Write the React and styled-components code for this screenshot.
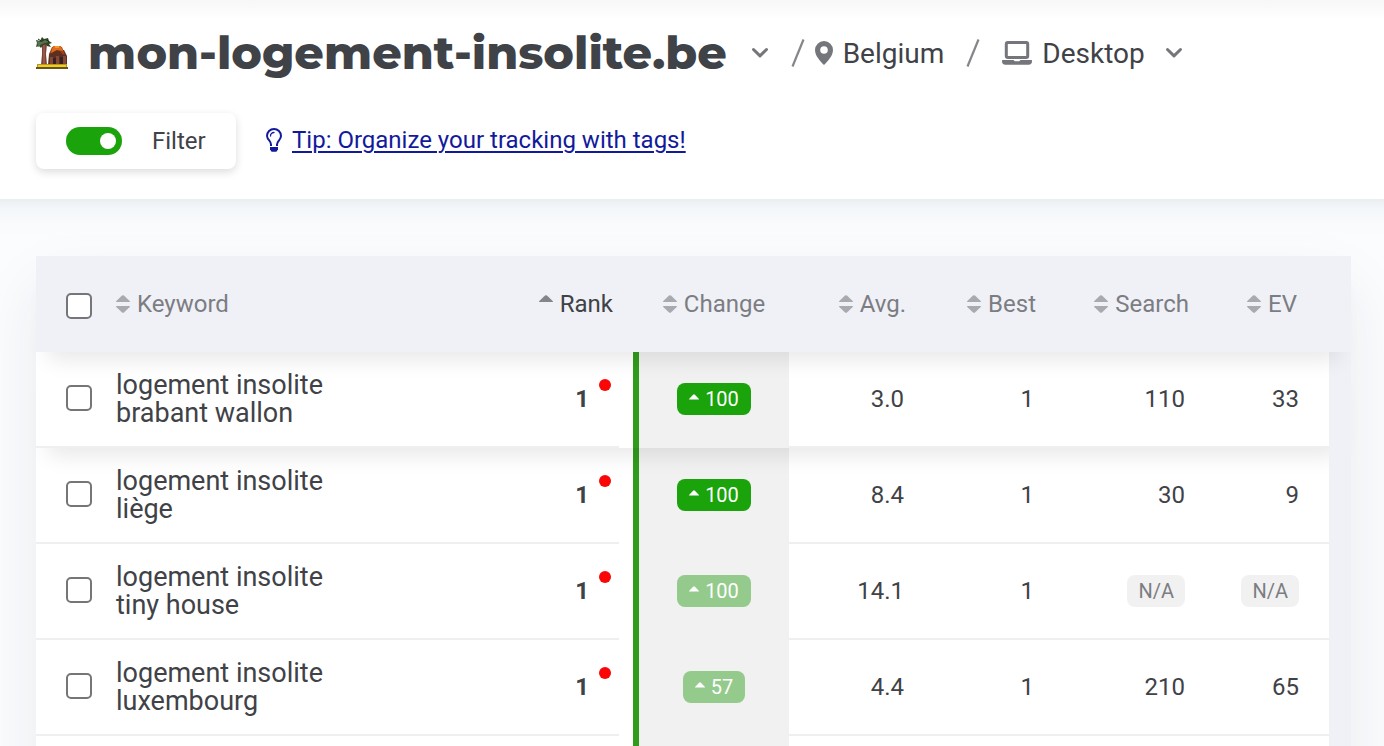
import React, { useState } from "react";
import styled, { createGlobalStyle } from "styled-components";

const keywords = [
  { name: ["logement insolite", "brabant wallon"], rank: 1, change: 100, avg: "3.0", best: 1, search: 110, ev: 33, raised: true },
  { name: ["logement insolite", "liège"], rank: 1, change: 100, avg: "8.4", best: 1, search: 30, ev: 9 },
  { name: ["logement insolite", "tiny house"], rank: 1, change: 100, avg: "14.1", best: 1, search: null, ev: null, faded: true },
  { name: ["logement insolite", "luxembourg"], rank: 1, change: 57, avg: "4.4", best: 1, search: 210, ev: 65, faded: true },
];

const App = () => {
  const [filter, setFilter] = useState(true);

  return (
    <Page>
      <GlobalStyle />
      <Header>
        <TitleRow>
          <SiteIcon />
          <Title>mon-logement-insolite.be</Title>
          <IconButton aria-label="Switch site">
            <Chevron />
          </IconButton>
          <SlashIcon />
          <Place>
            <PinIcon />
            Belgium
          </Place>
          <SlashIcon />
          <DeviceButton>
            <LaptopIcon />
            Desktop
            <Chevron />
          </DeviceButton>
        </TitleRow>
        <ToolRow>
          <FilterCard>
            <Switch
              type="checkbox"
              role="switch"
              checked={filter}
              onChange={(e) => setFilter(e.target.checked)}
            />
            Filter
          </FilterCard>
          <TipLink href="#tags">
            <BulbIcon />
            <span>Tip: Organize your tracking with tags!</span>
          </TipLink>
        </ToolRow>
      </Header>
      <Content>
        <KeywordTable />
      </Content>
    </Page>
  );
};

const KeywordTable = () => {
  return (
    <Table>
      <colgroup>
        <Col $w={80} />
        <col />
        <Col $w={120} />
        <Col $w={156} />
        <Col $w={145} />
        <Col $w={130} />
        <Col $w={151} />
        <Col $w={114} />
        <Col $w={22} />
      </colgroup>
      <Head>
        <tr>
          <HeadCell $align="left" $left={30} $top={4}>
            <Checkbox type="checkbox" aria-label="Select all keywords" />
          </HeadCell>
          <SortHead label="Keyword" align="left" />
          <SortHead label="Rank" right={20} active />
          <SortHead label="Change" align="center" left={6} />
          <SortHead label="Avg." right={28} />
          <SortHead label="Best" right={28} />
          <SortHead label="Search" right={26} />
          <SortHead label="EV" right={32} />
          <HeadCell />
        </tr>
      </Head>
      <tbody>
        {keywords.map((row) => (
          <KeywordRow key={row.name[1]} row={row} />
        ))}
        <Row>
          <Cell />
          <Cell />
          <RankCell />
          <ChangeCell />
          <Cell />
          <Cell />
          <Cell />
          <Cell />
          <Gutter />
        </Row>
      </tbody>
    </Table>
  );
};

const SortHead = ({ label, align = "right", left = 0, right = 0, active }) => {
  return (
    <HeadCell $align={align} $left={left} $right={right} aria-sort={active ? "ascending" : "none"}>
      <SortButton $active={active}>
        <SortIcon active={active} />
        {label}
      </SortButton>
    </HeadCell>
  );
};

const KeywordRow = ({ row }) => {
  return (
    <Row $raised={row.raised}>
      <CheckCell>
        <Checkbox type="checkbox" aria-label={row.name.join(" ")} />
      </CheckCell>
      <NameCell>
        {row.name[0]}
        <br />
        {row.name[1]}
      </NameCell>
      <RankCell>
        <Rank>
          {row.rank}
          <Dot />
        </Rank>
      </RankCell>
      <ChangeCell>
        <Badge $faded={row.faded}>
          <BadgeArrow />
          {row.change}
        </Badge>
      </ChangeCell>
      <Cell>{row.avg}</Cell>
      <Cell>{row.best}</Cell>
      <Cell>{row.search ?? <Missing>N/A</Missing>}</Cell>
      <Cell>{row.ev ?? <Missing>N/A</Missing>}</Cell>
      <Gutter />
    </Row>
  );
};

// Icons
const SortIcon = ({ active }) => (
  <svg width="14" height="20" viewBox="0 0 14 20" aria-hidden="true">
    <path d="M0 8Q0 7.4.6 6.8L6 1.6Q7 .8 8 1.6L13.4 6.8Q14 7.4 14 8Z" fill={active ? "#84858c" : "#a9aaaf"} />
    {!active && <path d="M0 12Q0 12.6.6 13.2L6 18.4Q7 19.2 8 18.4L13.4 13.2Q14 12.6 14 12Z" fill="#a9aaaf" />}
  </svg>
);

const BadgeArrow = () => (
  <svg width="10" height="10" viewBox="0 0 10 10" aria-hidden="true">
    <path d="M0 5.4Q0 4.9 .5 4.4L4.1.7Q5 0 5.9.7L9.5 4.4Q10 4.9 10 5.4Z" fill="#fff" />
  </svg>
);

const SlashIcon = () => (
  <svg width="14" height="28" viewBox="0 0 14 28" fill="none" stroke="#85868a" strokeWidth="2.2" aria-hidden="true">
    <path d="M1.5 27.500L12.500.5" />
  </svg>
);

const Chevron = () => (
  <svg width="18" height="12" viewBox="0 0 18 12" fill="none" stroke="#75767a" strokeWidth="3" strokeLinecap="round" strokeLinejoin="round" aria-hidden="true">
    <path d="M2.500 2.500L9 8.800l6.500-6.300" />
  </svg>
);

const PinIcon = () => (
  <svg width="18" height="24" viewBox="0 0 18 24" aria-hidden="true">
    <path fillRule="evenodd" fill="#75767b" d="M9 0a9 9 0 0 0-9 9c0 5.600 5 11 9 15 4-4 9-9.400 9-15a9 9 0 0 0-9-9Zm0 5.200a3.800 3.800 0 1 1 0 7.600 3.800 3.800 0 0 1 0-7.600Z" />
  </svg>
);

const LaptopIcon = () => (
  <svg width="30" height="24" viewBox="0 0 30 24" aria-hidden="true">
    <rect x="4.300" y="1.500" width="21.400" height="15" rx="1.500" fill="none" stroke="#75767b" strokeWidth="3" />
    <path fill="#75767b" d="M.6 19h10.800q.4 0 .6.500.3.700 1.100.7h3.800q.8 0 1.100-.7.200-.5.600-.5h10.800q.6 0 .6.600v.4q0 3.800-3.400 3.800H3.400Q0 23.800 0 20v-.4q0-.6.600-.6Z" />
  </svg>
);

const BulbIcon = () => (
  <svg width="16" height="24" viewBox="0 0 16 24" fill="none" stroke="#121a9c" strokeWidth="2" aria-hidden="true">
    <path d="M5 18v-1.500c0-1.500-.7-2.700-1.700-4A7.200 7.200 0 0 1 1 8a7 7 0 0 1 14 0c0 1.800-1 3.200-2 4.500s-2 2.500-2 4V18" />
    <path d="M4.500 8A3.500 3.500 0 0 1 8 4.500" strokeWidth="1.300" strokeLinecap="round" />
    <path d="M4 19h8v2.500l-1.600 2.300H5.600L4 21.500Z" fill="#121a9c" stroke="none" />
  </svg>
);

const SiteIcon = () => (
  <svg width="32" height="32" viewBox="0 0 32 32" aria-hidden="true">
    <path d="M6 7h5l-1 10 1 11H5l1-11Z" fill="#7d4435" />
    <path d="M7 8h2v19H7Z" fill="#96584a" />
    <path d="M6 0l2 2 4-1 1 3 3 2-3 1 2 3-4-1-1-2-3 1-2 3-2-2-3 1 1-4-1-3 4 1Z" fill="#2f4423" />
    <path d="M1 4l5 1 3-2 4 2-4 1-3 1-4 3Z" fill="#577250" />
    <path d="M11 3l2 2M2 2l3 2" stroke="#17271a" />
    <path d="M13 17l3-4h12l3 6v9H12Z" fill="#5b2f22" />
    <path d="M16 10h10l3 8-3-1-2-3-4-1-4 3-3 1Z" fill="#9b4219" />
    <path d="M17 9h8l2 5-6-1-6 3Z" fill="#df6b1d" />
    <path d="M19 9h4v2h-4Z" fill="#f19a35" />
    <path d="M14 20h3v7h-3ZM20 19h3v8h-3ZM27 19h3v8h-3Z" fill="#844936" />
    <path d="M17 21h3v6h-3ZM24 20h3v7h-3Z" fill="#382123" />
    <path d="M1 27h30v4H1Z" fill="#b99917" />
    <path d="M2 28h28v2H2Z" fill="#f1cc27" />
    <path d="M0 30h32v2H0Z" fill="#66551b" />
  </svg>
);

// Styled components
const GlobalStyle = createGlobalStyle`
  * {
    box-sizing: border-box;
  }

  body {
    margin: 0;
    background: #fbfcfe;
    color: #3f4247;
    font-family: Roboto, "Liberation Sans", sans-serif;
    font-size: 24px;
  }

  button {
    padding: 0;
    border: 0;
    background: none;
    color: inherit;
    font: inherit;
    cursor: pointer;
  }

  svg {
    display: block;
    flex: none;
  }
`;

const Page = styled.div`
  display: flex;
  flex-direction: column;
  height: 100vh;
  overflow: hidden;
`;

const Header = styled.header`
  flex: none;
  padding: 22px 36px 30px;
  background: linear-gradient(#f7f7f7, #fff 20px);
`;

const TitleRow = styled.div`
  display: flex;
  align-items: center;
  height: 62px;
  font-size: 28px;
  white-space: nowrap;
`;

const Title = styled.h1`
  margin: 0 24px 0 20px;
  font-family: Montserrat, Inter, sans-serif;
  font-size: 46px;
  font-weight: 800;
  line-height: 60px;
`;

const IconButton = styled.button`
  margin-right: 22px;
`;

const Place = styled.span`
  display: flex;
  align-items: center;
  gap: 10px;
  margin: 0 22px 0 10px;
`;

const DeviceButton = styled.button`
  display: flex;
  align-items: center;
  gap: 10px;
  margin-left: 22px;

  svg:last-child {
    margin-left: 10px;
  }
`;

const ToolRow = styled.div`
  display: flex;
  align-items: center;
  gap: 30px;
  margin-top: 29px;
`;

const FilterCard = styled.label`
  display: flex;
  align-items: center;
  gap: 30px;
  width: 200px;
  height: 56px;
  padding: 0 30px;
  border-radius: 8px;
  background: #fff;
  box-shadow: 0 3px 8px rgba(0, 0, 0, 0.14);
`;

const Switch = styled.input`
  appearance: none;
  display: flex;
  justify-content: ${(p) => (p.checked ? "flex-end" : "flex-start")};
  align-items: center;
  flex: none;
  width: 56px;
  height: 28px;
  margin: 0;
  padding: 0 6px;
  border-radius: 14px;
  background: ${(p) => (p.checked ? "#1aa30b" : "#a9aaaf")};
  cursor: pointer;

  &::before {
    content: "";
    width: 16px;
    height: 16px;
    border-radius: 50%;
    background: #fff;
  }
`;

const TipLink = styled.a`
  display: flex;
  align-items: center;
  gap: 10px;
  padding-bottom: 2px;
  color: #121a9c;
  text-decoration: none;

  span {
    text-decoration: underline;
    text-decoration-thickness: 2px;
    text-underline-offset: 3px;
  }
`;

const Content = styled.main`
  flex: 1;
  padding: 57px 33px 0 36px;
  background: linear-gradient(#e9eef1, #f4f7f9 10px, #f9fbfd 26px, #fbfcfe 44px);
`;

const Table = styled.table`
  width: 100%;
  table-layout: fixed;
  border-spacing: 0;
  box-shadow: 0 30px 60px rgba(30, 35, 50, 0.08);
`;

const Col = styled.col`
  width: ${(p) => p.$w}px;
`;

const Head = styled.thead`
  position: relative;
  z-index: 3;
  box-shadow: 0 20px 20px -12px rgba(0, 0, 0, 0.09);
`;

const HeadCell = styled.th`
  height: 96px;
  padding: ${(p) => p.$top || 2}px ${(p) => p.$right || 0}px 0 ${(p) => p.$left || 0}px;
  background: #f0f1f6;
  font-weight: 400;
  text-align: ${(p) => p.$align || "right"};
`;

const SortButton = styled.button`
  display: inline-flex;
  align-items: center;
  gap: 7px;
  color: ${(p) => (p.$active ? "#3f4247" : "#7c7d83")};
`;

const Row = styled.tr`
  position: relative;
  z-index: ${(p) => (p.$raised ? 1 : "auto")};
  box-shadow: ${(p) => (p.$raised ? "0 20px 20px -12px rgba(0, 0, 0, 0.09)" : "none")};
`;

const Cell = styled.td`
  height: 96px;
  padding: 0 30px 0 0;
  border-bottom: 2px solid #efefef;
  background: #fff;
  text-align: right;
`;

const CheckCell = styled(Cell)`
  padding: 0 0 2px 30px;
`;

const NameCell = styled(Cell)`
  padding: 0;
  font-size: 27px;
  line-height: 28px;
  text-align: left;
`;

const RankCell = styled(Cell)`
  padding: 0 22px 2px 0;
  border-bottom: 0;
  background: linear-gradient(#efefef, #efefef) left bottom / calc(100% - 14px) 2px no-repeat #fff;
`;

const Rank = styled.span`
  display: inline-flex;
  gap: 10px;
  height: 40px;
  font-weight: 700;
  line-height: 40px;
  vertical-align: middle;
`;

const Dot = styled.i`
  width: 12px;
  height: 12px;
  border-radius: 50%;
  background: #f90606;
`;

const ChangeCell = styled(Cell)`
  padding: 0 0 2px;
  border-bottom: 0;
  border-left: 6px solid #2f9c1b;
  background: #f1f1f1;
  text-align: center;
`;

const Gutter = styled.td`
  position: relative;
  z-index: 2;
  background: #f0f1f6;
`;

const Badge = styled.span`
  display: inline-flex;
  align-items: center;
  gap: 6px;
  height: 32px;
  padding: 0 12px;
  border-radius: 8px;
  background: ${(p) => (p.$faded ? "#94ca8c" : "#1aa30b")};
  color: #fff;
  font-size: 20px;
  vertical-align: middle;
`;

const Missing = styled.span`
  display: inline-flex;
  align-items: center;
  height: 32px;
  padding: 0 11px;
  border-radius: 8px;
  background: #f1f1f1;
  color: #7c7d83;
  font-size: 20px;
`;

const Checkbox = styled.input`
  appearance: none;
  display: block;
  width: 26px;
  height: 26px;
  margin: 0;
  border: 2px solid #75767a;
  border-radius: 5px;
  background: #fff;
  cursor: pointer;

  &:checked {
    background: #1aa30b;
  }
`;

export default App;
